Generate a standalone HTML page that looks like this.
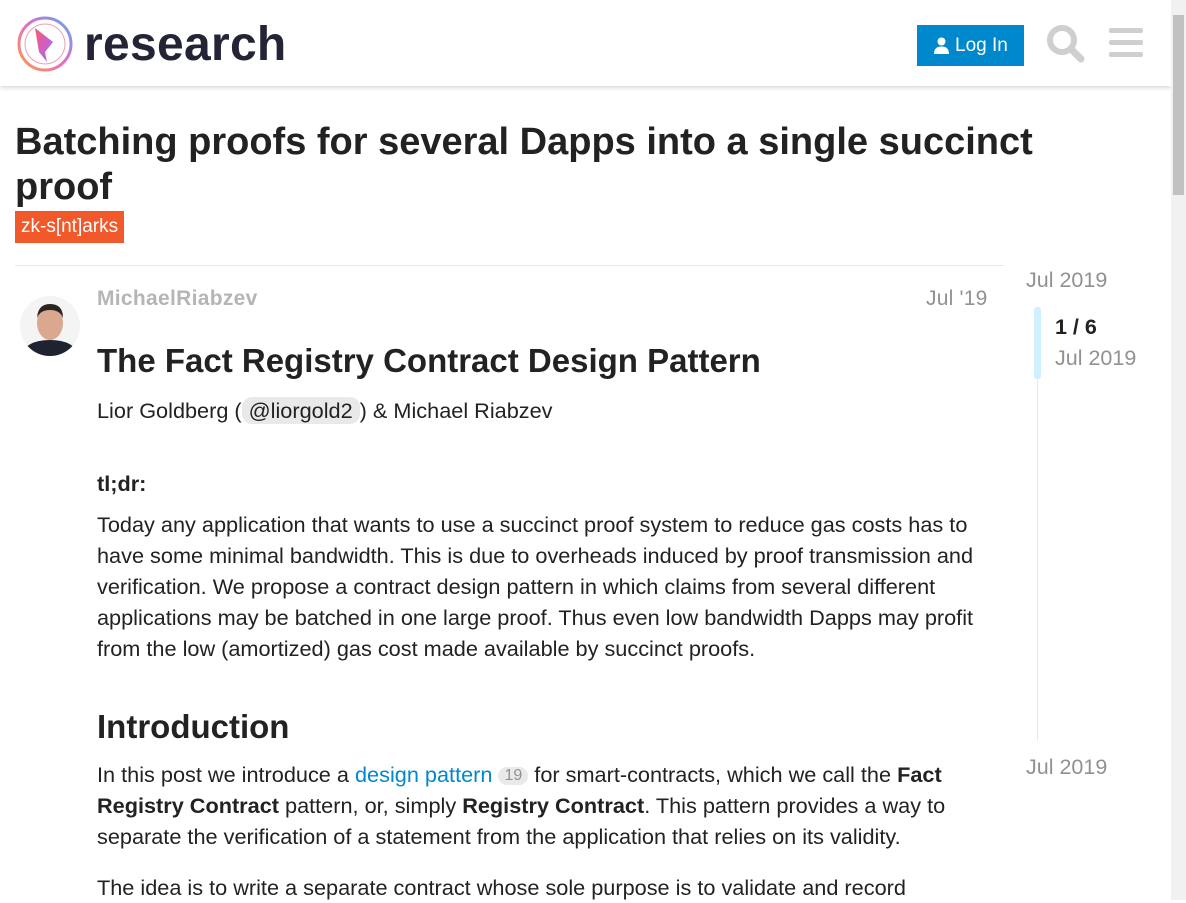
<!DOCTYPE html>
<html><head><meta charset="utf-8"><style>
*{margin:0;padding:0;box-sizing:border-box}
body{width:1186px;height:900px;overflow:hidden;background:#fff;font-family:"Liberation Sans",Arial,sans-serif;color:#222;position:relative}
.hdr{position:absolute;left:0;top:0;width:1171px;height:86px;background:#fff;box-shadow:0 2px 4px rgba(0,0,0,.15)}
.logo-t{position:absolute;left:84px;top:17px;font-size:48px;font-weight:bold;color:#232536;letter-spacing:0.3px}
.login{position:absolute;left:917px;top:25px;width:107px;height:41px;background:#0088cc;color:#fff;font-size:19px;line-height:41px;padding-left:38px}
.sb{position:absolute;left:1171px;top:0;width:15px;height:900px;background:#f1f1f1}
.thumb{position:absolute;left:1173px;top:15px;width:11px;height:180px;background:#c1c1c1}
h1{position:absolute;left:15px;top:120px;width:1060px;font-size:38px;line-height:45px;font-weight:bold;color:#222}
.tag{position:absolute;left:15px;top:211px;height:32px;background:#f1592a;color:#fff;font-size:19px;line-height:32px;padding:0 6px}
.hr{position:absolute;left:15px;top:265px;width:989px;height:1px;background:#e9e9e9}
.av{position:absolute;left:20px;top:296px;width:60px;height:60px;border-radius:50%;overflow:hidden}
.name{position:absolute;left:97px;top:287px;font-size:21px;font-weight:bold;color:#b5b5b5;letter-spacing:0.3px}
.date{position:absolute;left:926px;top:287px;font-size:21px;color:#919191;letter-spacing:0.2px}
.body{position:absolute;left:97px;width:910px;font-size:21.7px;line-height:31px;color:#222}
h2{font-size:33px;font-weight:bold}
.mention{background:#e9e9e9;border-radius:10px;padding:1px 7px}
a{color:#0088cc;text-decoration:none}
.cnt{background:#e9e9e9;color:#919191;font-size:16px;line-height:16px;border-radius:10px;padding:1px 6px;display:inline-block;vertical-align:2px}
.tl{position:absolute;color:#919191;font-size:21.5px}
</style></head><body>
<div class="hdr">
<svg style="position:absolute;left:17px;top:16px" width="56" height="56" viewBox="0 0 56 56">
<defs><linearGradient id="g" x1="0" y1="0" x2="1" y2="1"><stop offset="0" stop-color="#f85a6a"/><stop offset=".5" stop-color="#d060c0"/><stop offset="1" stop-color="#9a6cf8"/></linearGradient>
<linearGradient id="g2" x1="0" y1="1" x2="1" y2="0"><stop offset="0" stop-color="#f9a03f"/><stop offset=".5" stop-color="#e76cc3"/><stop offset="1" stop-color="#5aa8f8"/></linearGradient></defs>
<circle cx="28" cy="28" r="26" fill="none" stroke="url(#g2)" stroke-width="3"/>
<circle cx="28" cy="28" r="20" fill="none" stroke="#e8a0b8" stroke-width="1"/>
<path d="M18 12 L36 26 L28 36 L30 46 L22 36 Z" fill="url(#g)"/>
</svg>
<div class="logo-t">research</div>
<div class="login"><svg style="position:absolute;left:16px;top:12px" width="17" height="17" viewBox="0 0 17 17"><circle cx="8.5" cy="4.5" r="4" fill="#fff"/><path d="M1 17 Q1 9.5 8.5 9.5 Q16 9.5 16 17Z" fill="#fff"/></svg>Log In</div>
<svg style="position:absolute;left:1046px;top:24px" width="40" height="40" viewBox="0 0 40 40"><circle cx="16" cy="16" r="12" fill="none" stroke="#cfcfcf" stroke-width="6"/><path d="M25 25 L35 35" stroke="#cfcfcf" stroke-width="7" stroke-linecap="round"/></svg>
<div style="position:absolute;left:1109px;top:28px;width:34px;height:5px;background:#cfcfcf;border-radius:2px"></div>
<div style="position:absolute;left:1109px;top:40px;width:34px;height:5px;background:#cfcfcf;border-radius:2px"></div>
<div style="position:absolute;left:1109px;top:52px;width:34px;height:5px;background:#cfcfcf;border-radius:2px"></div>
</div>
<div class="sb"></div><div class="thumb"></div>
<h1>Batching proofs for several Dapps into a single succinct proof</h1>
<div class="tag">zk-s[nt]arks</div>
<div class="hr"></div>
<div class="av"><svg width="60" height="60" viewBox="0 0 60 60"><rect width="60" height="60" fill="#f4f4f4"/><path d="M0 60 Q6 44 30 44 Q54 44 60 60Z" fill="#1f2230"/><ellipse cx="30" cy="27" rx="13" ry="17" fill="#d9a88e"/><path d="M17 22 Q18 8 30 8 Q43 8 43 22 Q40 14 30 14 Q20 14 17 22Z" fill="#2a2422"/></svg></div>
<div class="name">MichaelRiabzev</div>
<div class="date">Jul '19</div>
<div class="body" style="top:341px"><h2 style="font-size:33px;line-height:40px">The Fact Registry Contract Design Pattern</h2></div>
<div class="body" style="top:395px">Lior Goldberg (<span class="mention">@liorgold2</span>) &amp; Michael Riabzev</div>
<div class="body" style="top:468px;font-weight:bold">tl;dr:</div>
<div class="body" style="top:509px">Today any application that wants to use a succinct proof system to reduce gas costs has to have some minimal bandwidth. This is due to overheads induced by proof transmission and verification. We propose a contract design pattern in which claims from several different applications may be batched in one large proof. Thus even low bandwidth Dapps may profit from the low (amortized) gas cost made available by succinct proofs.</div>
<div class="body" style="top:705px"><h2 style="line-height:44px">Introduction</h2></div>
<div class="body" style="top:759px">In this post we introduce a <a>design pattern</a> <span class="cnt">19</span> for smart-contracts, which we call the <b>Fact Registry Contract</b> pattern, or, simply <b>Registry Contract</b>. This pattern provides a way to separate the verification of a statement from the application that relies on its validity.</div>
<div class="body" style="top:872px">The idea is to write a separate contract whose sole purpose is to validate and record</div>
<div class="tl" style="left:1026px;top:268px">Jul 2019</div>
<div style="position:absolute;left:1034px;top:307px;width:7px;height:72px;background:#d1f0ff;border-radius:3px"></div>
<div style="position:absolute;left:1037px;top:379px;width:1px;height:362px;background:#d1f0ff"></div>
<div class="tl" style="left:1055px;top:315px;color:#222;font-weight:bold">1 / 6</div>
<div class="tl" style="left:1055px;top:346px">Jul 2019</div>
<div class="tl" style="left:1026px;top:755px">Jul 2019</div>
</body></html>
